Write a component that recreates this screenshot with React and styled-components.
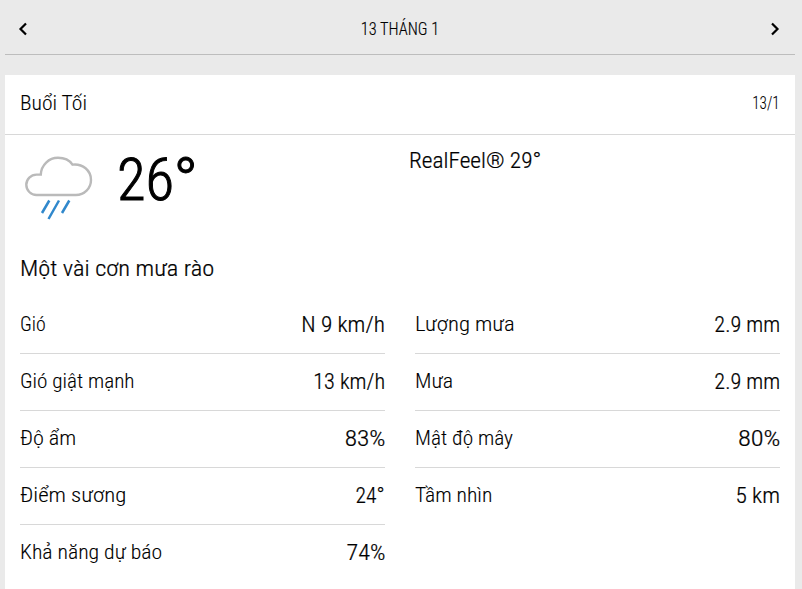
import React from 'react';
import styled, { createGlobalStyle } from 'styled-components';

const GlobalStyle = createGlobalStyle`
  * {
    box-sizing: border-box;
  }
  body {
    margin: 0;
    background-color: #eaeaea;
    color: #000;
    font-family: Roboto, 'Noto Sans', sans-serif;
    font-stretch: 75%;
    overflow: hidden;
  }
`;

const Page = styled.main`
  width: 802px;
  height: 589px;
  padding: 0 7px 0 5px;
  display: flex;
  flex-direction: column;
  gap: 20px;
`;

const DateBar = styled.nav`
  height: 55px;
  padding: 3px 15px 0 13px;
  display: flex;
  align-items: center;
  justify-content: space-between;
  border-bottom: 1px solid #bdbdbd;
`;

const Arrow = styled.svg`
  width: 10px;
  height: 14px;
  fill: none;
  stroke: #000;
  stroke-width: 2.2;
`;

const Text = styled.span`
  display: block;
  width: fit-content;
  white-space: nowrap;
  font-size: ${({ size }) => size || 20}px;
  font-weight: 300;
  line-height: 1.2;
  -webkit-text-stroke: ${({ stroke }) => stroke || 0}px #000;
  transform: scaleX(${({ fit }) => fit || 1});
  transform-origin: ${({ origin }) => origin || 'left'} center;
`;

const Label = styled(Text)`
  padding-bottom: 2px;
`;

const Card = styled.section`
  flex: 1;
  background-color: #fff;
`;

const CardHeader = styled.header`
  height: 60px;
  padding: 0 15px 3px;
  display: flex;
  align-items: center;
  justify-content: space-between;
  border-bottom: 1px solid #d8d8d8;
`;

const Summary = styled.div`
  height: 112px;
  padding: 9px 15px 0;
  display: grid;
  grid-template-columns: 97px 292px 1fr;
  align-items: start;
`;

const WeatherIcon = styled.svg`
  width: 80px;
  height: 80px;
  fill: none;
`;

const Temperature = styled.div`
  display: flex;
  align-items: flex-start;
`;

const Degree = styled(Text)`
  margin: -1px 0 0 -2px;
`;

const RealFeel = styled.div`
  padding-top: 4px;
`;

const Phrase = styled.div`
  height: 50px;
  padding: 9px 15px 0;
`;

const Details = styled.div`
  padding: 0 15px;
  display: grid;
  grid-template-columns: 365px 365px;
  column-gap: 30px;
`;

const Row = styled.div`
  height: 57px;
  display: flex;
  align-items: center;
  justify-content: space-between;
  border-bottom: 1px solid ${({ last }) => (last ? 'transparent' : '#d8d8d8')};
`;

const left = [
  { label: 'Gió', labelFit: 0.99, value: 'N 9 km/h', valueFit: 1.06 },
  { label: 'Gió giật mạnh', labelFit: 1.06, value: '13 km/h', valueFit: 1.01 },
  { label: 'Độ ẩm', labelFit: 1.11, value: '83%', valueFit: 1.15 },
  { label: 'Điểm sương', labelFit: 1.14, value: '24°', valueFit: 0.98 },
  { label: 'Khả năng dự báo', labelFit: 1.085, value: '74%', valueFit: 1.1 },
];

const right = [
  { label: 'Lượng mưa', labelFit: 1.135, value: '2.9 mm', valueFit: 1.01 },
  { label: 'Mưa', labelFit: 1.1, value: '2.9 mm', valueFit: 1.01 },
  { label: 'Mật độ mây', labelFit: 1.065, value: '80%', valueFit: 1.2 },
  { label: 'Tầm nhìn', labelFit: 1.08, value: '5 km', valueFit: 1.06 },
];

const Column = ({ items }) => (
  <div>
    {items.map(({ label, labelFit, value, valueFit }, i) => (
      <Row key={label} last={i === items.length - 1 ? 1 : 0}>
        <Label size={20} stroke={0.1} fit={labelFit}>
          {label}
        </Label>
        <Text size={22} stroke={0.22} fit={valueFit} origin='right'>
          {value}
        </Text>
      </Row>
    ))}
  </div>
);

const App = () => (
  <>
    <GlobalStyle />
    <Page>
      <DateBar>
        <Arrow viewBox='0 0 10 14'>
          <path d='M8 1.5 2.5 7 8 12.5' />
        </Arrow>
        <Text size={18} stroke={0.15} fit={0.91} origin='60%'>
          13 THÁNG 1
        </Text>
        <Arrow viewBox='0 0 10 14'>
          <path d='M2 1.5 7.5 7 2 12.5' />
        </Arrow>
      </DateBar>
      <Card>
        <CardHeader>
          <Text size={20} stroke={0.1} fit={1.08}>
            Buổi Tối
          </Text>
          <Text size={18} stroke={0.1} fit={0.84} origin='right'>
            13/1
          </Text>
        </CardHeader>
        <Summary>
          <WeatherIcon viewBox='20 144 80 80'>
            <path
              d='M36.5 195a10.200 10.200 0 0 1 0-20.400h4.300C41.200 164.800 49 157.800 58 157.800c6.500 0 11.500 2.500 14.500 6.800 10.200-1.200 18.500 5.800 18.500 15.300a15.100 15.100 0 0 1-15.100 15.100Z'
              stroke='#bababa'
              strokeWidth='2.4'
            />
            <path
              d='M49.3 200.500 42 213M59 200.500 48.500 219M69.300 200.500 62 213'
              stroke='#3088cc'
              strokeWidth='2.5'
            />
          </WeatherIcon>
          <Temperature>
            <Text size={60} stroke={1} fit={0.98}>
              26
            </Text>
            <Degree size={66} stroke={1}>
              °
            </Degree>
          </Temperature>
          <RealFeel>
            <Text size={22} stroke={0.22} fit={1.06}>
              RealFeel® 29°
            </Text>
          </RealFeel>
        </Summary>
        <Phrase>
          <Text size={22} stroke={0.22} fit={1.11}>
            Một vài cơn mưa rào
          </Text>
        </Phrase>
        <Details>
          <Column items={left} />
          <Column items={right} />
        </Details>
      </Card>
    </Page>
  </>
);

export default App;
